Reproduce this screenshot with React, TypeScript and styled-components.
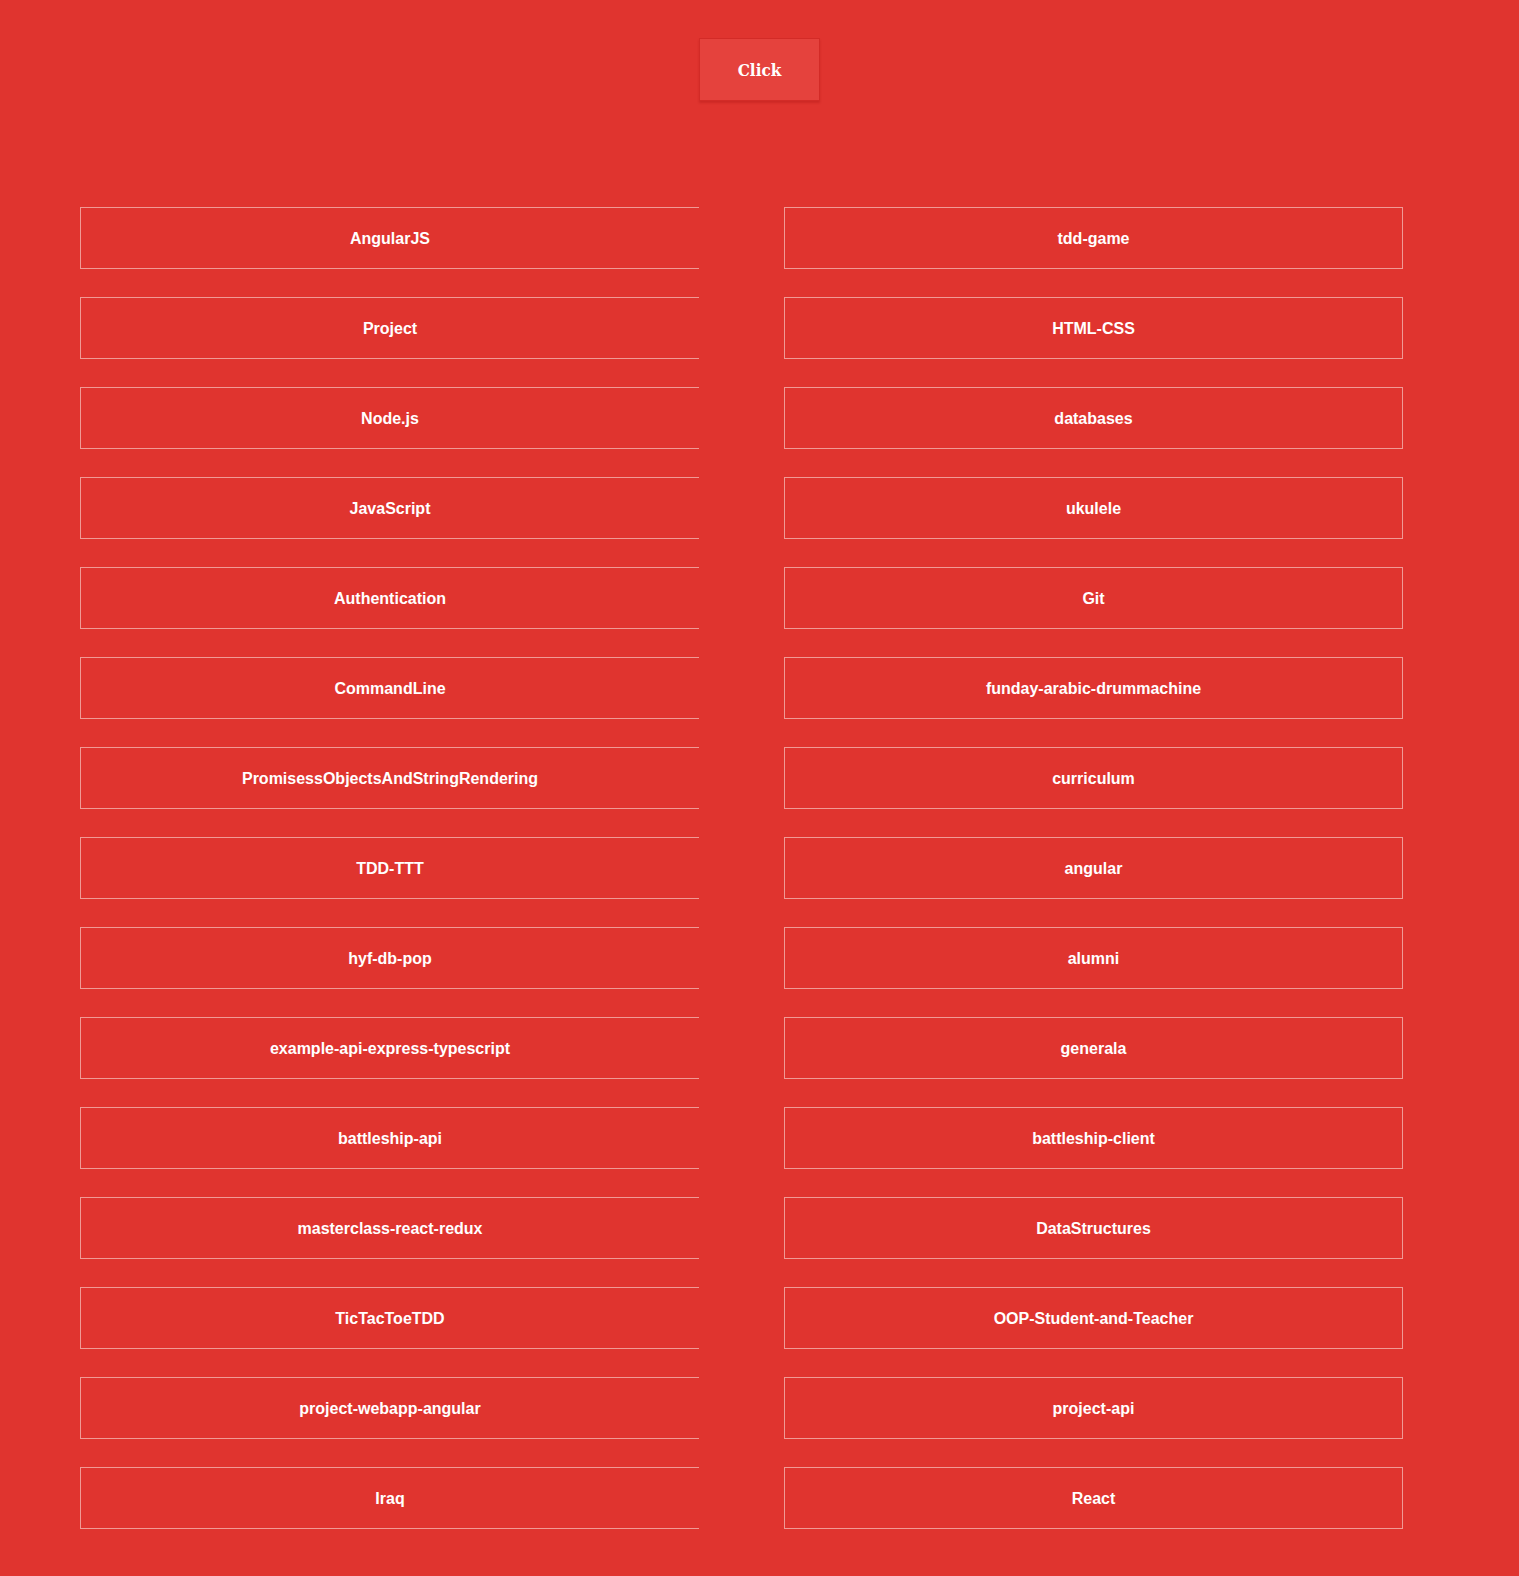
import styled, { createGlobalStyle } from 'styled-components'

const repos = [
	'AngularJS', 'tdd-game',
	'Project', 'HTML-CSS',
	'Node.js', 'databases',
	'JavaScript', 'ukulele',
	'Authentication', 'Git',
	'CommandLine', 'funday-arabic-drummachine',
	'PromisessObjectsAndStringRendering', 'curriculum',
	'TDD-TTT', 'angular',
	'hyf-db-pop', 'alumni',
	'example-api-express-typescript', 'generala',
	'battleship-api', 'battleship-client',
	'masterclass-react-redux', 'DataStructures',
	'TicTacToeTDD', 'OOP-Student-and-Teacher',
	'project-webapp-angular', 'project-api',
	'Iraq', 'React',
];

const GlobalStyle = createGlobalStyle`
	html, body {
		margin: 0;
		padding: 0;
		background-color: #e0342f;
	}
`;

const Page = styled.main`
	min-height: 1576px;
	padding-top: 38px;
	box-sizing: border-box;
	background-color: #e0342f;
`;

const Header = styled.header`
	display: flex;
	justify-content: center;
`;

const ClickButton = styled.button`
	width: 121px;
	height: 63px;
	padding: 1px 0 0;
	background-color: #e5423d;
	border: 1px solid #d32b27;
	box-shadow: 0 2px 2px rgba(170, 20, 20, 0.35);
	color: #fff;
	font-family: "DejaVu Serif", serif;
	font-stretch: condensed;
	font-weight: bold;
	font-size: 17px;
	cursor: pointer;
`;

const RepoGrid = styled.section`
	display: grid;
	grid-template-columns: 619px 619px;
	column-gap: 85px;
	row-gap: 28px;
	padding: 106px 0 46px 80px;
`;

const Repo = styled.div<{ $left: boolean }>`
	height: 62px;
	padding-top: 2px;
	box-sizing: border-box;
	border: 1px solid #f09a95;
	border-right: ${(p) => (p.$left ? 'none' : '1px solid #f09a95')};
	display: flex;
	justify-content: center;
	align-items: center;

	& p {
		margin: 0;
		color: #fff;
		font-family: "Liberation Sans", Arial, sans-serif;
		font-weight: bold;
		font-size: 16px;
	}
`;

const App = () => {
	return (
		<Page>
			<GlobalStyle />
			<Header>
				<ClickButton>Click</ClickButton>
			</Header>
			<RepoGrid>
				{repos.map((repo, index) => (
					<Repo key={repo} $left={index % 2 === 0}>
						<p>{repo}</p>
					</Repo>
				))}
			</RepoGrid>
		</Page>
	)
}

export default App
